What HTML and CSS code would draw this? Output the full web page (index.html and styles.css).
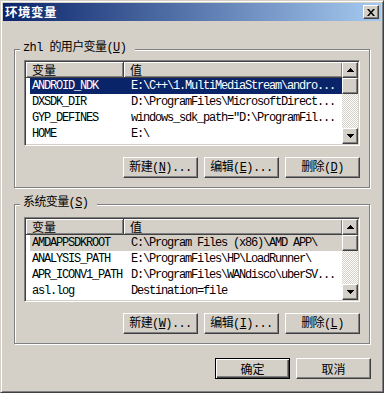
FILE: index.html
```html
<!DOCTYPE html>
<html lang="zh">
<head>
<meta charset="utf-8">
<title>环境变量</title>
<link rel="stylesheet" href="styles.css">
</head>
<body>
<div class="window">
  <div class="titlebar">
    <span class="title">环境变量</span>
    <button class="close" aria-label="关闭"><svg width="8" height="7" viewBox="0 0 8 7"><path d="M0 0h2l2 2.5L6 0h2L5 3.5 8 7H6L4 4.5 2 7H0l3-3.5z" fill="#000"/></svg></button>
  </div>
  <div class="content">
    <div class="group group-user">
      <div class="legend">zhl 的用户变量(<u>U</u>)</div>
      <div class="listview">
        <div class="list-main">
          <div class="list-header"><div class="hcell c1">变量</div><div class="hcell c2">值</div></div>
          <div class="row selected"><span class="cell c1">ANDROID_NDK</span><span class="cell c2">E:\C++\1.MultiMediaStream\andro...</span></div>
          <div class="row"><span class="cell c1">DXSDK_DIR</span><span class="cell c2">D:\ProgramFiles\MicrosoftDirect...</span></div>
          <div class="row"><span class="cell c1">GYP_DEFINES</span><span class="cell c2">windows_sdk_path="D:\ProgramFil...</span></div>
          <div class="row"><span class="cell c1">HOME</span><span class="cell c2">E:\</span></div>
        </div>
        <div class="scrollbar">
          <div class="sb-btn"><svg width="7" height="4" viewBox="0 0 7 4"><path d="M3 0h1v1h1v1h1v1h1v1H0V3h1V2h1V1h1z" fill="#000"/></svg></div>
          <div class="sb-thumb"></div>
          <div class="sb-track"></div>
          <div class="sb-btn"><svg width="7" height="4" viewBox="0 0 7 4"><path d="M0 0h7v1H6v1H5v1H4v1H3V3H2V2H1V1H0z" fill="#000"/></svg></div>
        </div>
      </div>
      <div class="btn-row">
        <button class="btn">新建(<u>N</u>)...</button>
        <button class="btn">编辑(<u>E</u>)...</button>
        <button class="btn">删除(<u>D</u>)</button>
      </div>
    </div>

    <div class="group group-system">
      <div class="legend">系统变量(<u>S</u>)</div>
      <div class="listview">
        <div class="list-main">
          <div class="list-header"><div class="hcell c1">变量</div><div class="hcell c2">值</div></div>
          <div class="row inactive"><span class="cell c1">AMDAPPSDKROOT</span><span class="cell c2">C:\Program Files (x86)\AMD APP\</span></div>
          <div class="row"><span class="cell c1">ANALYSIS_PATH</span><span class="cell c2">E:\ProgramFiles\HP\LoadRunner\</span></div>
          <div class="row"><span class="cell c1">APR_ICONV1_PATH</span><span class="cell c2">D:\ProgramFiles\WANdisco\uberSV...</span></div>
          <div class="row"><span class="cell c1">asl.log</span><span class="cell c2">Destination=file</span></div>
        </div>
        <div class="scrollbar">
          <div class="sb-btn"><svg width="7" height="4" viewBox="0 0 7 4"><path d="M3 0h1v1h1v1h1v1h1v1H0V3h1V2h1V1h1z" fill="#000"/></svg></div>
          <div class="sb-thumb"></div>
          <div class="sb-track"></div>
          <div class="sb-btn"><svg width="7" height="4" viewBox="0 0 7 4"><path d="M0 0h7v1H6v1H5v1H4v1H3V3H2V2H1V1H0z" fill="#000"/></svg></div>
        </div>
      </div>
      <div class="btn-row">
        <button class="btn">新建(<u>W</u>)...</button>
        <button class="btn">编辑(<u>I</u>)...</button>
        <button class="btn">删除(<u>L</u>)</button>
      </div>
    </div>

    <div class="footer">
      <button class="btn default">确定</button>
      <button class="btn">取消</button>
    </div>
  </div>
</div>
</body>
</html>
```
FILE: styles.css
```css
* { box-sizing: border-box; }
html, body { margin: 0; padding: 0; }
body {
  width: 384px;
  height: 393px;
  overflow: hidden;
  font: 12px "Noto Sans CJK SC", "Liberation Sans", sans-serif;
  color: #000;
  background: #D4D0C8;
}
.window {
  width: 384px;
  height: 393px;
  background: #D4D0C8;
  border: 1px solid;
  border-color: #D4D0C8 #404040 #404040 #D4D0C8;
  box-shadow: inset 1px 1px #fff, inset -1px -1px #808080;
  padding: 2px;
  display: flex;
  flex-direction: column;
}
.titlebar {
  height: 18px;
  flex: none;
  display: flex;
  align-items: center;
  justify-content: space-between;
  padding: 0 2px;
  background: linear-gradient(to right, #0A246A, #A6CAF0);
}
.title {
  color: #fff;
  font-weight: bold;
  font-size: 12.5px;
  letter-spacing: 0.5px;
  line-height: 18px;
}
.close, .sb-btn, .sb-thumb {
  background: #D4D0C8;
  border: 1px solid;
  border-color: #fff #404040 #404040 #fff;
  box-shadow: inset -1px -1px #808080;
}
.close {
  width: 16px;
  height: 14px;
  padding: 0;
  display: flex;
  align-items: center;
  justify-content: center;
}
.close svg { display: block; }
.content { padding: 28px 11px 0; }
.group {
  border: 1px solid #808080;
  box-shadow: inset 1px 1px #fff, 1px 1px #fff;
}
.group-user { height: 139px; }
.group-system { height: 140px; margin-top: 16px; }
.legend, .btn-row .btn {
  font-family: "Liberation Mono", "Noto Sans CJK SC", monospace;
  letter-spacing: -0.6px;
}
.legend {
  width: fit-content;
  height: 14px;
  line-height: 14px;
  margin: -9px 0 0 5px;
  padding: 0 9px 0 3px;
  background: #D4D0C8;
  white-space: nowrap;
}
.listview {
  width: 336px;
  height: 86px;
  margin: 5px 0 0 9px;
  border: 1px solid;
  border-color: #808080 #fff #fff #808080;
  box-shadow: inset 1px 1px #404040, inset -1px -1px #D4D0C8;
  padding: 1px;
  background: #fff;
  display: flex;
}
.group-system .listview { height: 85px; margin-top: 7px; }
.list-main {
  flex: 1;
  min-width: 0;
  overflow: hidden;
  background: #fff;
}
.list-header { display: flex; height: 16px; }
.hcell {
  height: 16px;
  line-height: 15px;
  background: #D4D0C8;
  border-right: 1px solid #404040;
  box-shadow: inset 1px 1px #fff, inset -1px -1px #808080;
  border-bottom: 1px solid #404040;
  white-space: nowrap;
}
.hcell.c1 { width: 98px; padding-left: 6px; }
.hcell.c2 { flex: 1; padding-left: 6px; border-right: none; }
.row {
  display: flex;
  height: 16px;
  line-height: 16px;
  margin-left: 4px;
  font-family: "Liberation Mono", monospace;
  font-size: 12px;
  letter-spacing: -1.2px;
  white-space: nowrap;
}
.row.selected { background: #0A246A; color: #fff; }
.row.inactive { background: #D4D0C8; }
.cell { overflow: hidden; }
.cell.c1 { width: 94px; flex: none; padding-left: 2px; }
.cell.c2 { flex: 1; padding-left: 7px; }
.scrollbar {
  width: 16px;
  flex: none;
  display: flex;
  flex-direction: column;
}
.sb-btn {
  height: 16px;
  flex: none;
  display: flex;
  align-items: center;
  justify-content: center;
}
.sb-btn svg { display: block; }
.sb-thumb { height: 16px; flex: none; }
.sb-track {
  flex: 1;
  background: repeating-conic-gradient(#fff 0 25%, #D4D0C8 0 50%) 0 0 / 2px 2px;
}
.btn-row {
  display: flex;
  justify-content: flex-end;
  gap: 6px;
  width: 336px;
  margin: 11px 0 0 9px;
}
.btn {
  width: 75px;
  height: 21px;
  padding: 0;
  font: inherit;
  color: #000;
  background: #D4D0C8;
  border: 1px solid;
  border-color: #fff #404040 #404040 #fff;
  box-shadow: inset -1px -1px #808080;
  line-height: 18px;
  white-space: nowrap;
}
.btn.default {
  border: 1px solid #000;
  box-shadow: inset 1px 1px #fff, inset -1px -1px #404040, inset -2px -2px #808080;
}
.footer {
  display: flex;
  justify-content: flex-end;
  gap: 6px;
  margin: 14px -1px 0 0;
}
```
